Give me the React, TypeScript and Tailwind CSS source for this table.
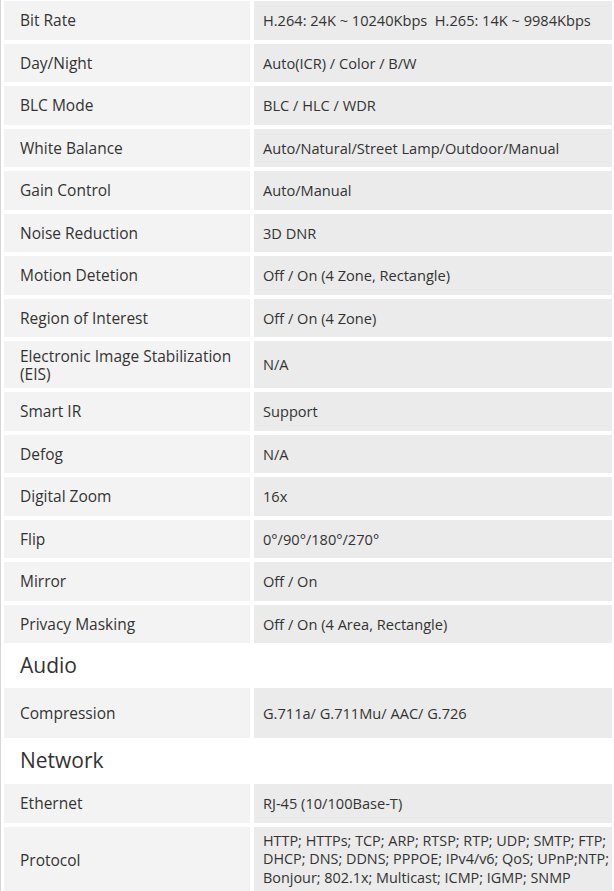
import { Fragment } from "react";

type Row = { label: string; value: string | string[]; h?: string };

const video: Row[] = [
  { label: "Bit Rate", value: "H.264: 24K ~ 10240Kbps\u00a0\u00a0H.265: 14K ~ 9984Kbps" },
  { label: "Day/Night", value: "Auto(ICR) / Color / B/W" },
  { label: "BLC Mode", value: "BLC / HLC / WDR" },
  { label: "White Balance", value: "Auto/Natural/Street Lamp/Outdoor/Manual" },
  { label: "Gain Control", value: "Auto/Manual" },
  { label: "Noise Reduction", value: "3D DNR" },
  { label: "Motion Detetion", value: "Off / On (4 Zone, Rectangle)" },
  { label: "Region of Interest", value: "Off / On (4 Zone)" },
  { label: "Electronic Image Stabilization (EIS)", value: "N/A", h: "h-[47px]" },
  { label: "Smart IR", value: "Support" },
  { label: "Defog", value: "N/A" },
  { label: "Digital Zoom", value: "16x" },
  { label: "Flip", value: "0°/90°/180°/270°" },
  { label: "Mirror", value: "Off / On" },
  { label: "Privacy Masking", value: "Off / On (4 Area, Rectangle)" },
];

const audio: Row[] = [
  { label: "Compression", value: "G.711a/ G.711Mu/ AAC/ G.726", h: "h-[50px]" },
];

const network: Row[] = [
  { label: "Ethernet", value: "RJ-45 (10/100Base-T)" },
  {
    label: "Protocol",
    value: [
      "HTTP; HTTPs; TCP; ARP; RTSP; RTP; UDP; SMTP; FTP;",
      "DHCP; DNS; DDNS; PPPOE; IPv4/v6; QoS; UPnP;NTP;",
      "Bonjour; 802.1x; Multicast; ICMP; IGMP; SNMP",
    ],
    h: "h-[66px]",
  },
];

function SpecRows({ rows }: { rows: Row[] }) {
  return (
    <div className="grid grid-cols-[246px_minmax(0,1fr)] gap-1">
      {rows.map((r) => (
        <Fragment key={r.label}>
          <div
            className={`${r.h ?? "h-[38.5px]"} flex items-center bg-[#f3f3f3] pl-4 pr-3 text-[15.5px] leading-[18px]`}
          >
            {r.label}
          </div>
          <div
            className={`${r.h ?? "h-[38.5px]"} flex items-center bg-[#ebebeb] pl-[9px] text-[14.6px] leading-[18.5px]`}
          >
            {Array.isArray(r.value) ? (
              <div className="whitespace-nowrap text-[14.4px]">
                {r.value.map((line) => (
                  <div key={line}>{line}</div>
                ))}
              </div>
            ) : (
              r.value
            )}
          </div>
        </Fragment>
      ))}
    </div>
  );
}

function Heading({ children, h }: { children: string; h: string }) {
  return <div className={`${h} flex items-center pl-4 text-[21px] text-[#333]`}>{children}</div>;
}

export default function App() {
  return (
    <div
      className="w-[614px] min-h-[891px] overflow-hidden bg-white text-[#333] pt-px pl-[3px] pr-[2px] border-l border-[#d6d6d6]"
      style={{ fontFamily: '"Open Sans", "Noto Sans", sans-serif' }}
    >
      <SpecRows rows={video} />
      <div className="h-1" />
      <Heading h="h-[37px]">Audio</Heading>
      <div className="h-1" />
      <SpecRows rows={audio} />
      <div className="h-1" />
      <Heading h="h-[38px]">Network</Heading>
      <div className="h-1" />
      <SpecRows rows={network} />
    </div>
  );
}
